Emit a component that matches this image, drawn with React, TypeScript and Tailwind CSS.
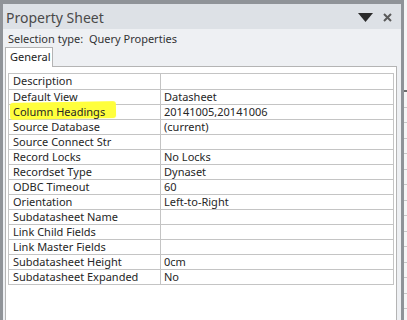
const ROWS: [string, string][] = [
  ["Description", ""],
  ["Default View", "Datasheet"],
  ["Column Headings", "20141005,20141006"],
  ["Source Database", "(current)"],
  ["Source Connect Str", ""],
  ["Record Locks", "No Locks"],
  ["Recordset Type", "Dynaset"],
  ["ODBC Timeout", "60"],
  ["Orientation", "Left-to-Right"],
  ["Subdatasheet Name", ""],
  ["Link Child Fields", ""],
  ["Link Master Fields", ""],
  ["Subdatasheet Height", "0cm"],
  ["Subdatasheet Expanded", "No"],
];

export default function App() {
  return (
    <div
      className="w-[407px] h-[320px] flex overflow-hidden bg-[#eef0f3] text-[#262626]"
      style={{ fontFamily: '"Noto Sans", "Open Sans", sans-serif' }}
    >
      <div className="w-[404px] h-full shrink-0 border-t-[4px] border-l-[3px] border-r-[3px] border-[#8f9398] flex flex-col">
        {/* title bar */}
        <div className="h-[25px] shrink-0 bg-[#dde1e6] flex items-center justify-between pl-[3px] pr-[9px]">
          <span className="text-[14px] leading-none text-[#4a4a4a] mt-[2px]">Property Sheet</span>
          <div className="flex items-center gap-[10px] mt-[1px]">
            <svg width="15" height="9" viewBox="0 0 15 9">
              <polygon points="0,0 15,0 7.5,9" fill="#2b2b2b" />
            </svg>
            <svg width="9" height="9" viewBox="0 0 9 9">
              <path d="M1 1 L8 8 M8 1 L1 8" stroke="#5a5a5a" strokeWidth="2" />
            </svg>
          </div>
        </div>

        {/* selection type */}
        <div className="h-[18px] shrink-0 flex items-center pl-[5px] text-[11px] leading-none text-[#333]">
          Selection type:&nbsp;&nbsp;Query Properties
        </div>

        {/* tabs + panel */}
        <div className="flex-1 flex flex-col ml-[2px] mr-[4px]">
          <div className="flex">
            <div className="h-[20px] w-[48px] bg-white border border-b-0 border-[#b4b4b4] relative z-10 -mb-px flex items-center pl-[4px] text-[11px] text-[#222]">
              General
            </div>
          </div>
          <div className="flex-1 bg-white border border-b-0 border-[#b4b4b4] pt-[6px] px-[2px]">
            <div className="border border-[#c4c4c4]">
              {ROWS.map(([label, value], i) => (
                <div
                  key={label}
                  className={`flex h-[15px] text-[11px] leading-[14px] ${i > 0 ? "border-t border-[#c4c4c4]" : ""}`}
                >
                  <div className="relative w-[152px] shrink-0 border-r border-[#c4c4c4] pl-[4px]">
                    {label === "Column Headings" && (
                      <div className="absolute left-[1px] top-[-3px] w-[106px] h-[17px] bg-[#ffff3c] rounded-[3px] -rotate-1 blur-[0.4px]" />
                    )}
                    <span className="relative whitespace-nowrap">{label}</span>
                  </div>
                  <div className="pl-[3px] whitespace-nowrap">{value}</div>
                </div>
              ))}
            </div>
          </div>
        </div>
      </div>

      {/* sliver of the datasheet behind */}
      <div className="flex-1 bg-[#f6f6f6] flex flex-col pt-[88px]">
        <div className="h-[4px] shrink-0 border-b-2 border-[#6d6d6d]" />
        {Array.from({ length: 15 }).map((_, i) => (
          <div key={i} className="h-[15.5px] shrink-0 border-b border-[#c8c8c8]" />
        ))}
      </div>
    </div>
  );
}
